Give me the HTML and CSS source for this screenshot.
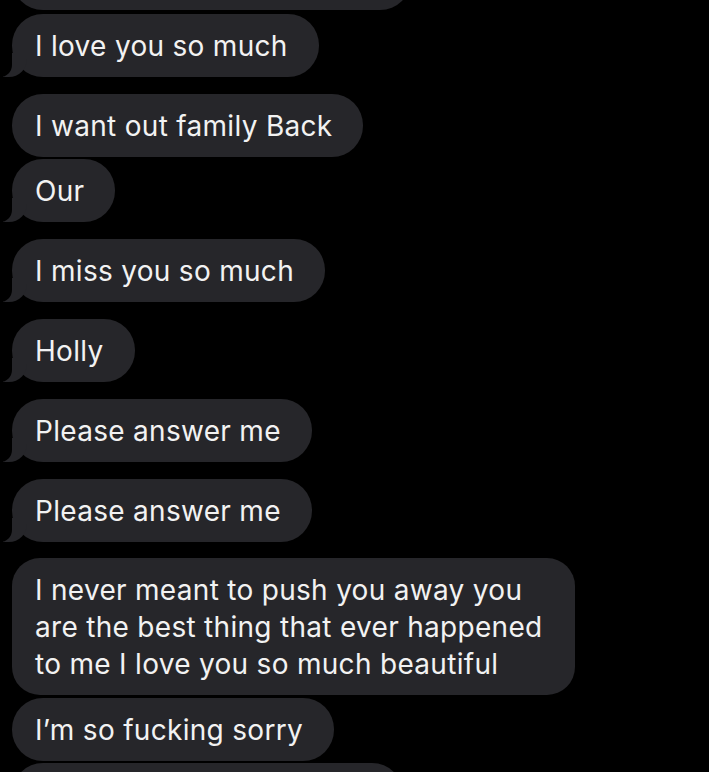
FILE: index.html
```html
<!DOCTYPE html>
<html lang="en">
<head>
  <meta charset="UTF-8">
  <meta name="viewport" content="width=device-width, initial-scale=1.0">
  <title>Messages</title>
  <link rel="stylesheet" href="styles.css">
</head>
<body>
  <main class="chat">
    <div class="bubble cut-top">&nbsp;</div>
    <div class="bubble tail">I love you so much</div>
    <div class="bubble">I want out family Back</div>
    <div class="bubble tail">Our</div>
    <div class="bubble tail">I miss you so much</div>
    <div class="bubble tail">Holly</div>
    <div class="bubble tail">Please answer me</div>
    <div class="bubble tail">Please answer me</div>
    <div class="bubble long">I never meant to push you away you are the best thing that ever happened to me I love you so much beautiful</div>
    <div class="bubble">I&rsquo;m so fucking sorry</div>
    <div class="bubble cut-bottom">&nbsp;</div>
  </main>
</body>
</html>
```

FILE: styles.css
```css
body {
  margin: 0;
  padding: 0;
  background-color: #000;
  color: #f2f2f2;
  font-family: 'Inter', 'Liberation Sans', sans-serif;
  overflow: hidden;
}
.chat {
  display: flex;
  flex-direction: column;
  align-items: flex-start;
  padding-left: 12px;
  height: 772px;
  overflow: hidden;
}
.bubble {
  position: relative;
  background-color: #26262a;
  border-radius: 31px;
  padding: 14px 31px 12px 23px;
  font-size: 28px;
  letter-spacing: 0.3px;
  line-height: 37px;
  margin-bottom: 2px;
}
.bubble.tail {
  margin-bottom: 17px;
}
.bubble.long {
  margin-top: -1px;
  margin-bottom: 3px;
  border-radius: 28px;
  padding-right: 20px;
  max-width: 520px;
}
.cut-top {
  margin-top: -53px;
  margin-bottom: 4px;
  width: 345px;
}
.cut-bottom {
  width: 337px;
}
.tail::before {
  content: "";
  position: absolute;
  bottom: 0;
  left: -9px;
  width: 24px;
  height: 24px;
  background-color: #26262a;
  border-bottom-right-radius: 18px;
}
.tail::after {
  content: "";
  position: absolute;
  bottom: 0;
  left: -12px;
  width: 12px;
  height: 24px;
  background-color: #000;
  border-bottom-right-radius: 12px;
}
```
